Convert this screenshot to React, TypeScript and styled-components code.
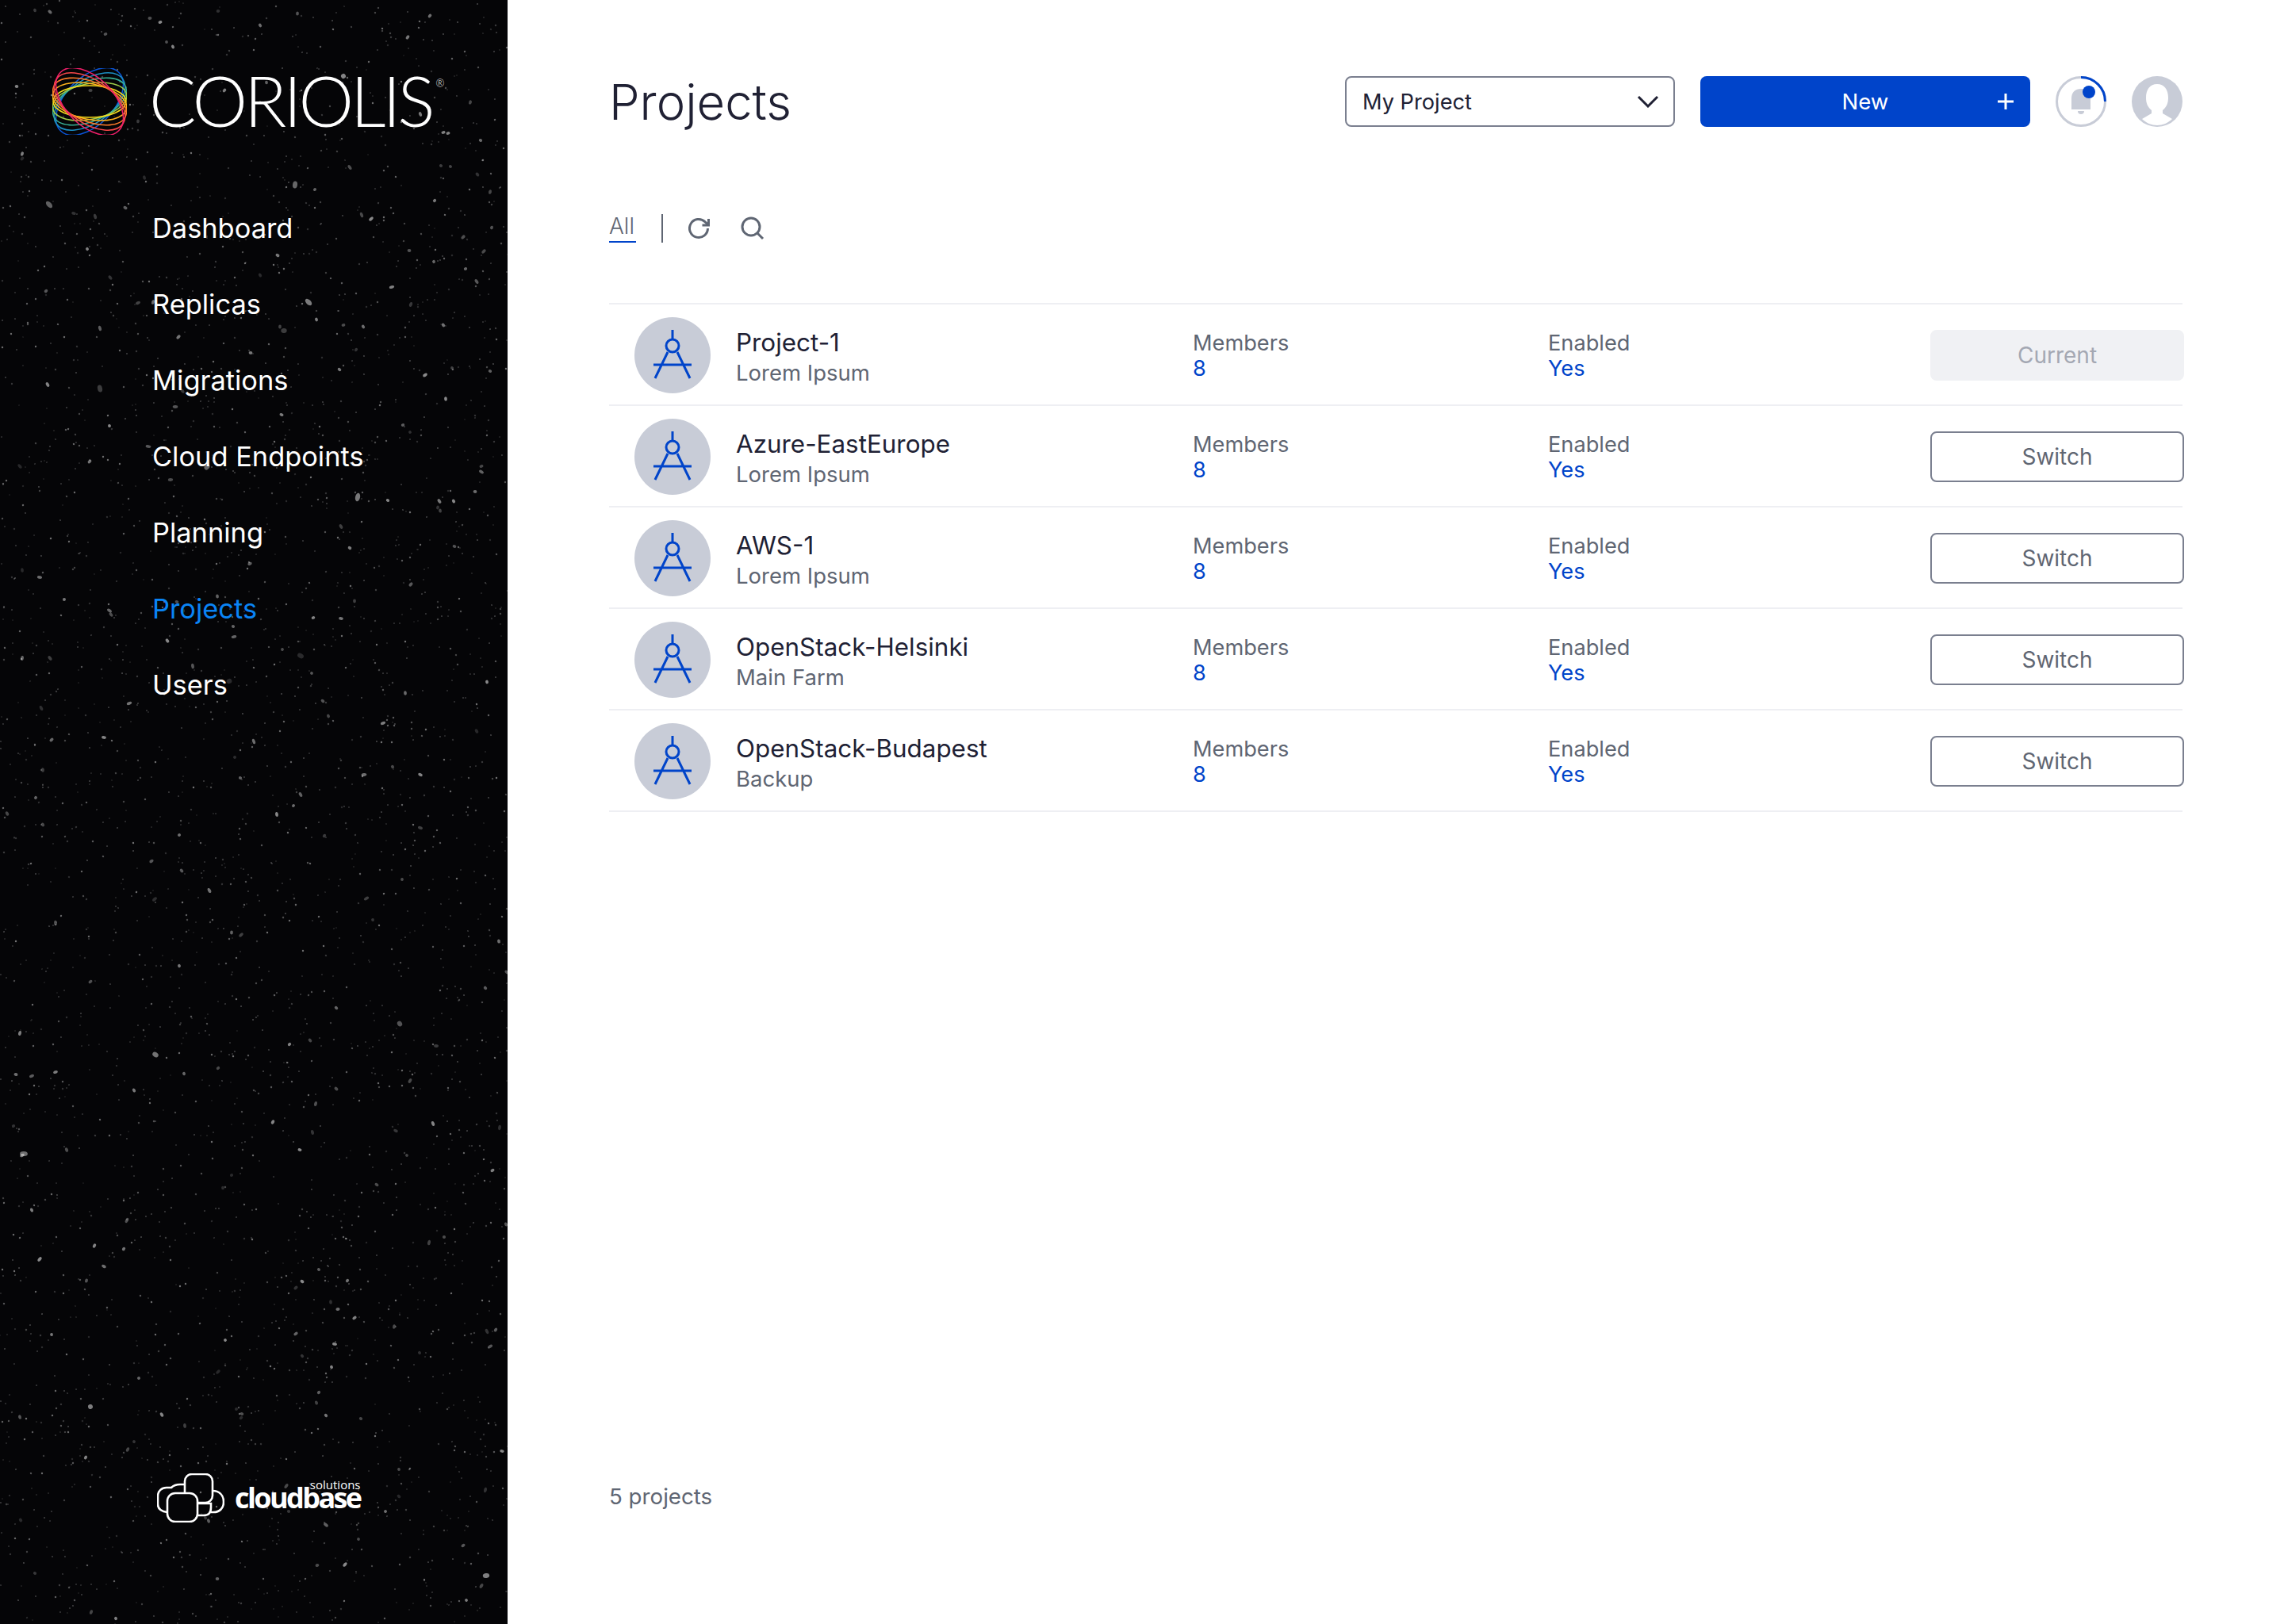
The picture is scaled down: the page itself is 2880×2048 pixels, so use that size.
import * as React from 'react';
import styled, { createGlobalStyle } from 'styled-components';

const BLUE = '#0044ca';
const DARK = '#202134';
const GRAY = '#5f6673';
const LIGHT = '#c8ccd7';
const LINE = '#eeeff3';

// seeded star field so every load draws the same sky
const makeStars = () => {
  let seed = 4217;
  const rnd = () => {
    seed = (seed * 16807) % 2147483647;
    return seed / 2147483647;
  };
  let dots = '';
  for (let i = 0; i < 3600; i++) {
    const x = (rnd() * 640).toFixed(0);
    const y = (rnd() * 2048).toFixed(0);
    const big = rnd();
    const r = big > 0.995 ? 3 : big > 0.93 ? 1.9 : big > 0.6 ? 1.2 : 0.8;
    const stretch = big > 0.93 ? 1 + rnd() * 0.8 : 1;
    const angle = (rnd() * 180).toFixed(0);
    const o = (0.14 + rnd() * (big > 0.93 ? 0.4 : 0.3)).toFixed(2);
    dots += `<ellipse cx='${x}' cy='${y}' rx='${r}' ry='${(r * stretch).toFixed(1)}' transform='rotate(${angle} ${x} ${y})' fill='#fff' opacity='${o}'/>`;
  }
  const svg = `<svg xmlns='http://www.w3.org/2000/svg' width='640' height='2048'><filter id='b' x='0' y='0' width='1' height='1'><feGaussianBlur stdDeviation='0.7'/></filter><g filter='url(#b)'>${dots}</g></svg>`;
  return `data:image/svg+xml,${encodeURIComponent(svg)}`;
};
const STARS = makeStars();

const GlobalStyle = createGlobalStyle`
  html, body {
    margin: 0;
    padding: 0;
    background: #fff;
  }
  body {
    font-family: Inter, "Noto Sans", sans-serif;
    color: ${DARK};
  }
`;

const Page = styled.div`
  display: flex;
  width: 2880px;
  height: 2048px;
  overflow: hidden;
`;
const Sidebar = styled.aside`
  width: 640px;
  flex: none;
  display: flex;
  flex-direction: column;
  background-color: #050507;
  background-image: url("${STARS}");
  background-repeat: no-repeat;
`;
const Brand = styled.div`
  display: flex;
  align-items: center;
  height: 84px;
  margin: 86px 0 0 66px;
`;
const LogoIcon = styled.svg`
  flex: none;
`;
const LogoText = styled.span`
  font-family: Lato, sans-serif;
  font-weight: 300;
  font-size: 88px;
  line-height: 84px;
  letter-spacing: -4px;
  color: #fff;
  margin: 0 0 4px 28px;
  white-space: nowrap;
`;
const LogoMark = styled.sup`
  font-size: 13px;
  line-height: 12px;
  letter-spacing: 0;
  margin-left: 5px;
  vertical-align: 50px;
`;
const Nav = styled.nav`
  display: flex;
  flex-direction: column;
  margin: 70px 0 0 192px;
`;
const NavItem = styled.a<{ $active?: boolean }>`
  display: block;
  height: 96px;
  line-height: 96px;
  font-size: 34.4px;
  color: ${p => (p.$active ? '#0a84f5' : '#fff')};
`;
const Cloudbase = styled.div`
  display: flex;
  align-items: flex-end;
  margin: auto 0 128px 198px;
`;
const CloudWords = styled.div`
  display: flex;
  flex-direction: column;
  align-items: flex-end;
  margin: 0 0 21px 13px;
  color: #fff;
  font-family: "Open Sans", sans-serif;
`;
const CloudSmall = styled.span`
  font-size: 15px;
  line-height: 14px;
  font-weight: 500;
`;
const CloudBig = styled.span`
  font-size: 36px;
  line-height: 20px;
  font-weight: 700;
  letter-spacing: -2.6px;
`;

const Main = styled.main`
  flex: 1;
  display: flex;
  flex-direction: column;
  padding: 96px 128px 144px;
`;
const Header = styled.header`
  display: flex;
  align-items: center;
  height: 64px;
`;
const Title = styled.h1`
  flex: 1;
  margin: 0;
  font-size: 61.5px;
  font-weight: 300;
  color: ${DARK};
`;
const Dropdown = styled.div`
  width: 416px;
  height: 64px;
  box-sizing: border-box;
  display: flex;
  align-items: center;
  justify-content: space-between;
  padding: 0 18px 0 20px;
  border: 2px solid #7a7f8f;
  border-radius: 8px;
  font-size: 27.2px;
`;
const NewButton = styled.button`
  position: relative;
  width: 416px;
  height: 64px;
  margin-left: 32px;
  border: 0;
  border-radius: 8px;
  background: ${BLUE};
  color: #fff;
  font: 400 27.5px Inter, sans-serif;
`;
const Plus = styled.svg`
  position: absolute;
  right: 20px;
  top: 21px;
`;
const RoundIcon = styled.svg`
  margin-left: 32px;
  flex: none;
`;
const Filters = styled.div`
  display: flex;
  align-items: center;
  height: 36px;
  margin-top: 110px;
`;
const FilterAll = styled.a`
  width: 34px;
  height: 36px;
  box-sizing: border-box;
  border-bottom: 2px solid ${BLUE};
  font-size: 28px;
  font-weight: 300;
  line-height: 30px;
  color: ${GRAY};
`;
const FilterSep = styled.span`
  width: 2px;
  height: 36px;
  margin: 0 32px;
  background: ${GRAY};
`;
const FilterIcon = styled.svg`
  flex: none;
  margin-right: 38px;
`;
const List = styled.div`
  margin-top: 76px;
  border-top: 2px solid ${LINE};
`;
const Row = styled.div`
  display: flex;
  align-items: center;
  height: 128px;
  box-sizing: border-box;
  padding: 2px 0 0 32px;
  border-bottom: 2px solid ${LINE};
`;
const Badge = styled.div`
  width: 96px;
  height: 96px;
  flex: none;
  display: flex;
  border-radius: 50%;
  background: ${LIGHT};
`;
const NameCell = styled.div`
  width: 576px;
  flex: none;
  margin: 3px 0 0 32px;
`;
const Name = styled.div`
  font-size: 31.4px;
  line-height: 40px;
  color: ${DARK};
`;
const Sub = styled.div`
  font-size: 27.5px;
  line-height: 36px;
  color: ${GRAY};
`;
const InfoCell = styled.div<{ $width: number }>`
  width: ${p => p.$width}px;
  flex: none;
  padding-top: 2px;
  font-size: 27.2px;
  line-height: 32px;
  color: ${GRAY};
`;
const InfoValue = styled.div`
  color: ${BLUE};
`;
const RowButton = styled.button<{ $current?: boolean }>`
  width: 320px;
  height: 64px;
  flex: none;
  margin-right: -2px;
  box-sizing: border-box;
  border: 2px solid ${p => (p.$current ? '#f0f1f4' : '#7a7f8f')};
  border-radius: 8px;
  background: ${p => (p.$current ? '#f0f1f4' : '#fff')};
  color: ${p => (p.$current ? '#a4a8b3' : GRAY)};
  font: 400 28px Inter, sans-serif;
`;
const Footer = styled.div`
  margin-top: auto;
  font-size: 27.7px;
  line-height: 34px;
  color: ${GRAY};
`;

const projects = [
  { name: 'Project-1', sub: 'Lorem Ipsum', current: true },
  { name: 'Azure-EastEurope', sub: 'Lorem Ipsum' },
  { name: 'AWS-1', sub: 'Lorem Ipsum' },
  { name: 'OpenStack-Helsinki', sub: 'Main Farm' },
  { name: 'OpenStack-Budapest', sub: 'Backup' },
];
const navItems = ['Dashboard', 'Replicas', 'Migrations', 'Cloud Endpoints', 'Planning', 'Projects', 'Users'];
const ringColors = ['#0a55d8', '#1c8fc4', '#37ad94', '#9ccb4a', '#f6dc1c', '#fbb01c', '#fb7a2a', '#f6474a', '#f01f6a'];

const CoriolisIcon = () => (
  <LogoIcon width="94" height="84" viewBox="-47 -42 94 84" fill="none">
    {ringColors.map((c, i) => {
      const t = (i - 4) / 4;
      const k = Math.abs(t);
      return (
        <ellipse
          key={c}
          rx={46 + 6 * k}
          ry={20 + 10 * k}
          stroke={c}
          strokeWidth="1.6"
          transform={`rotate(${t * 45})`}
        />
      );
    })}
  </LogoIcon>
);

const CompassIcon = () => (
  <svg width="96" height="96" viewBox="0 0 96 96" fill="none" stroke={BLUE} strokeWidth="3">
    <path d="M48 16v12M24 60h48M42 44 26 77M54 44l16 33" />
    <circle cx="48" cy="36" r="8" />
  </svg>
);

const CloudIcon = () => (
  <svg width="85" height="62" viewBox="0 0 85 62" fill="none" stroke="#fff" strokeWidth="2.6">
    <path d="M34 14h-5c-4 0-8 1-11 4H12C6 18 1 22 1 29v10c0 5 4 9 12 10" />
    <path d="M70 22c8 0 14 5 14 14 0 8-5 13-13 13h-3" />
    <path d="M52 38h16v5c0 7-3 10-9 10H52" />
    <rect x="35" y="1" width="35" height="36" rx="9" />
    <rect x="13" y="25" width="38" height="36" rx="10" fill="#050507" />
  </svg>
);

const App: React.FC = () => (
  <Page>
    <GlobalStyle />
    <Sidebar>
      <Brand>
        <CoriolisIcon />
        <LogoText>
          CORIOLIS<LogoMark>®</LogoMark>
        </LogoText>
      </Brand>
      <Nav>
        {navItems.map(item => (
          <NavItem key={item} $active={item === 'Projects'}>
            {item}
          </NavItem>
        ))}
      </Nav>
      <Cloudbase>
        <CloudIcon />
        <CloudWords>
          <CloudSmall>solutions</CloudSmall>
          <CloudBig>cloudbase</CloudBig>
        </CloudWords>
      </Cloudbase>
    </Sidebar>
    <Main>
      <Header>
        <Title>Projects</Title>
        <Dropdown>
          My Project
          <svg width="28" height="16" viewBox="0 0 28 16" fill="none" stroke={DARK} strokeWidth="3">
            <path d="M2 2l12 12L26 2" />
          </svg>
        </Dropdown>
        <NewButton>
          New
          <Plus width="22" height="22" viewBox="0 0 22 22" fill="none" stroke="#fff" strokeWidth="3">
            <path d="M11 1v20M1 11h20" />
          </Plus>
        </NewButton>
        <RoundIcon width="64" height="64" viewBox="0 0 64 64" fill="none">
          <circle cx="32" cy="32" r="30.5" stroke={LIGHT} strokeWidth="3" />
          <path d="M32 1.5A30.5 30.5 0 0 1 62.5 32" stroke={BLUE} strokeWidth="3" />
          <path d="M20 42V28c0-8 5-12 12-12s12 4 12 12v14z" fill={LIGHT} />
          <path d="M28 44h8a4 4 0 0 1-8 0z" fill={LIGHT} />
          <circle cx="42" cy="20" r="8" fill={BLUE} />
        </RoundIcon>
        <RoundIcon width="64" height="64" viewBox="0 0 64 64">
          <circle cx="32" cy="32" r="32" fill={LIGHT} />
          <path
            d="M32 10c-9 0-14 7-14 17 0 7 2 12 7 16v4l-12 7c5 5 12 8 19 8s14-3 19-8l-12-7v-4c5-4 7-9 7-16 0-10-5-17-14-17z"
            fill="#fff"
          />
        </RoundIcon>
      </Header>
      <Filters>
        <FilterAll>All</FilterAll>
        <FilterSep />
        <FilterIcon width="28" height="28" viewBox="0 0 28 28" fill="none" stroke={GRAY} strokeWidth="3">
          <path d="M24.5 14a11.5 11.5 0 1 1-3.6-8.4L25 9.5" />
          <path d="M25.5 2v8h-8" />
        </FilterIcon>
        <FilterIcon width="30" height="30" viewBox="0 0 30 30" fill="none" stroke={GRAY} strokeWidth="3">
          <circle cx="13" cy="13" r="11" />
          <path d="M21 21l7 7" />
        </FilterIcon>
      </Filters>
      <List>
        {projects.map(p => (
          <Row key={p.name}>
            <Badge>
              <CompassIcon />
            </Badge>
            <NameCell>
              <Name>{p.name}</Name>
              <Sub>{p.sub}</Sub>
            </NameCell>
            <InfoCell $width={448}>
              Members
              <InfoValue>8</InfoValue>
            </InfoCell>
            <InfoCell $width={482}>
              Enabled
              <InfoValue>Yes</InfoValue>
            </InfoCell>
            <RowButton $current={p.current}>{p.current ? 'Current' : 'Switch'}</RowButton>
          </Row>
        ))}
      </List>
      <Footer>5 projects</Footer>
    </Main>
  </Page>
);

export default App;
